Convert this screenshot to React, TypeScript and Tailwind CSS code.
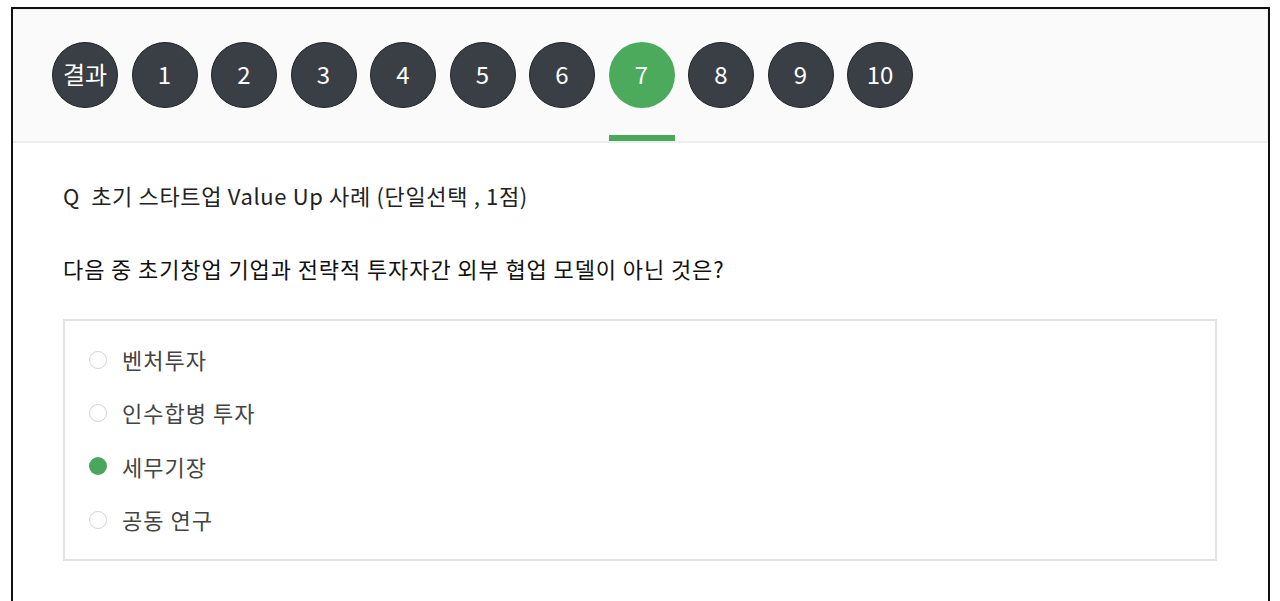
const tabs = ["결과", "1", "2", "3", "4", "5", "6", "7", "8", "9", "10"];

const options = [
  { label: "벤처투자", checked: false },
  { label: "인수합병 투자", checked: false },
  { label: "세무기장", checked: true },
  { label: "공동 연구", checked: false },
];

export default function App() {
  return (
    <div
      className="min-h-[601px] bg-white pt-[7px] pl-[11px]"
      style={{ fontFamily: '"Noto Sans CJK KR", "Noto Sans", sans-serif' }}
    >
      <div className="w-[1259px] h-[620px] border-2 border-[#111] bg-white">
        {/* question tabs */}
        <div className="flex h-[134px] gap-[13.5px] border-t border-r border-b-2 border-[#eeeeee] bg-[#fafafa] pl-[39px] pt-[32px]">
          {tabs.map((t) => {
            const active = t === "7";
            return (
              <div key={t} className="flex w-[66px] flex-col">
                <div
                  className={
                    active
                      ? "flex h-[66px] w-[66px] items-center justify-center rounded-full bg-[#4caa5c] pb-[2px] text-[24px] text-white"
                      : "flex h-[66px] w-[66px] items-center justify-center rounded-full border border-[#1f2226] bg-[#3a3f46] pb-[2px] text-[24px] text-white"
                  }
                >
                  {t}
                </div>
                <div className="flex-1" />
                <div className={active ? "h-[6px] bg-[#4aa85a]" : "h-[6px]"} />
              </div>
            );
          })}
        </div>

        {/* question body */}
        <div className="px-[50px] pt-[37px]">
          <p className="text-[22px] leading-[30px] tracking-[0.65px] text-[#222]">
            Q&nbsp; 초기 스타트업 Value Up 사례 (단일선택 , 1점)
          </p>
          <p className="mt-[43px] text-[22px] leading-[30px] tracking-[0.9px] text-[#111]">
            다음 중 초기창업 기업과 전략적 투자자간 외부 협업 모델이 아닌 것은?
          </p>

          <div className="mt-[36px] w-[1154px] border-2 border-[#e2e2e2] pt-[12px] pb-[13px] pl-[24px]">
            {options.map((o) => (
              <div key={o.label} className="flex h-[53.3px] items-center gap-[15px]">
                {o.checked ? (
                  <span className="h-[18px] w-[18px] rounded-full bg-[#4aa65a]" />
                ) : (
                  <span className="h-[18px] w-[18px] rounded-full border border-[#d4d4d4] bg-white" />
                )}
                <span className="text-[22px] tracking-[1px] text-[#444]">{o.label}</span>
              </div>
            ))}
          </div>
        </div>
      </div>
    </div>
  );
}
